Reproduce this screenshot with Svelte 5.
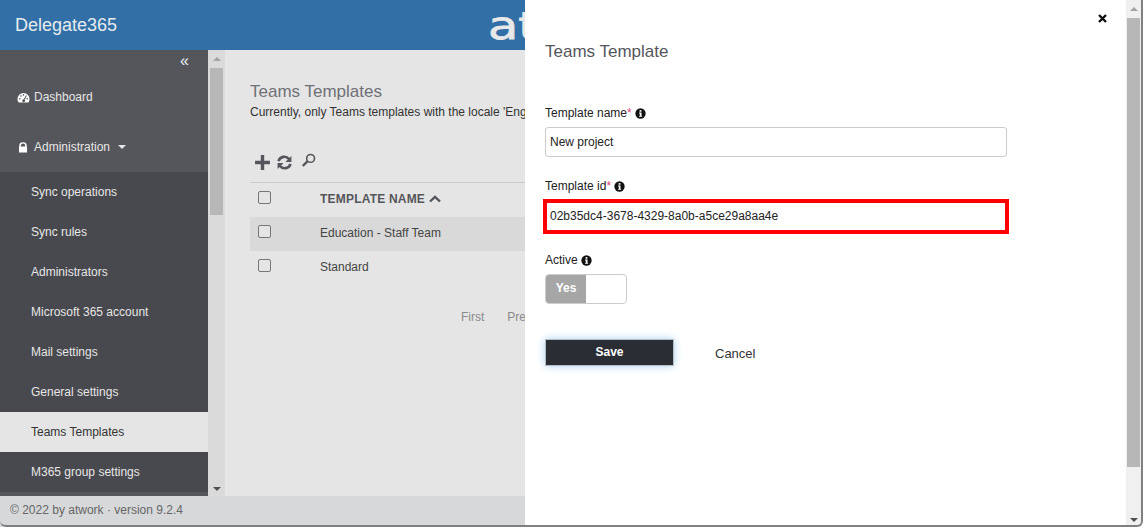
<script lang="ts">
  const subItems = [
    'Sync operations',
    'Sync rules',
    'Administrators',
    'Microsoft 365 account',
    'Mail settings',
    'General settings',
    'Teams Templates',
    'M365 group settings',
  ];
  const rows = ['Education - Staff Team', 'Standard'];
</script>

{#snippet info()}
  <svg class="info" viewBox="0 0 12 12" aria-hidden="true">
    <circle cx="6" cy="6" r="5.6" fill="#111" />
    <rect x="5" y="2.3" width="2" height="1.8" fill="#fff" />
    <path d="M4.4 5h2.7v3.6h.7v1H4.4v-1h.8V6h-.8z" fill="#fff" />
  </svg>
{/snippet}

{#snippet scrollArrows()}
  <span class="arrow arrow--up"></span>
  <span class="thumb"></span>
  <span class="arrow arrow--down"></span>
{/snippet}

<div class="page">
  <header class="topbar">
    <span class="brand">Delegate365</span>
    <span class="logo">atwork</span>
  </header>

  <div class="body">
    <aside class="sidebar">
      <div class="menu">
        <div class="collapse">«</div>
        <a class="item item--first">
          <svg class="ico" viewBox="0 0 14 12" aria-hidden="true">
            <path d="M7 1a6.6 6.6 0 0 0-6.6 6.6c0 1.5.5 2.8 1.3 3.9h10.6a6.5 6.5 0 0 0 1.3-3.9A6.6 6.6 0 0 0 7 1z" fill="#fff" />
            <g fill="#55565b">
              <circle cx="3" cy="7.4" r=".9" /><circle cx="4.2" cy="4.4" r=".9" /><circle cx="7" cy="3.2" r=".9" /><circle cx="11" cy="7.4" r=".9" />
              <path d="M9.8 3.6l.9.5-2.4 4.4a1.5 1.5 0 1 1-1-.5z" />
            </g>
          </svg>
          Dashboard
        </a>
        <a class="item">
          <svg class="ico ico--lock" viewBox="0 0 10 12" aria-hidden="true">
            <path d="M1 5V3.6a4 3.3 0 0 1 8 0V5h.4v6.4H.6V5zm1.7 0h4.6V3.7a2.3 2 0 0 0-4.6 0z" fill="#fff" />
          </svg>
          Administration
          <span class="caret"></span>
        </a>
        <nav class="sub">
          {#each subItems as label}
            <a class="sub__item" class:sub__item--active={label === 'Teams Templates'}>{label}</a>
          {/each}
        </nav>
      </div>
      <div class="scroll scroll--side">{@render scrollArrows()}</div>
    </aside>

    <main class="content">
      <h1 class="title">Teams Templates</h1>
      <p class="lead">Currently, only Teams templates with the locale 'English' are supported.</p>

      <div class="tools">
        <svg class="tool" width="17" height="17" viewBox="0 0 16 16" aria-hidden="true">
          <path d="M6.4 1h3.2v5.4H15v3.2H9.6V15H6.4V9.6H1V6.4h5.4z" fill="#55565b" />
        </svg>
        <svg class="tool" width="15" height="15" viewBox="0 0 15 15" aria-hidden="true">
          <path d="M1.5 6.2A6 6 0 0 1 12 4" fill="none" stroke="#55565b" stroke-width="2.6" />
          <path d="M13.5 8.8A6 6 0 0 1 3 11" fill="none" stroke="#55565b" stroke-width="2.6" />
          <path d="M14.4 1v6h-6zM.6 14V8h6z" fill="#55565b" />
        </svg>
        <svg class="tool tool--search" width="15" height="15" viewBox="0 0 15 15" aria-hidden="true">
          <circle cx="9.6" cy="5.4" r="3.9" fill="none" stroke="#55565b" stroke-width="1.6" />
          <path d="M6.6 8.2L1.8 13" stroke="#55565b" stroke-width="2.4" />
        </svg>
      </div>

      <div class="table">
        <div class="row row--head">
          <span class="check"></span>
          <span class="cell">TEMPLATE NAME</span>
          <svg class="sort" width="12" height="8" viewBox="0 0 12 8" aria-hidden="true">
            <path d="M1 6.5L6 1.8l5 4.7" fill="none" stroke="#55565b" stroke-width="2.4" />
          </svg>
        </div>
        {#each rows as row, i}
          <div class="row" class:row--shade={i === 0}>
            <span class="check"></span>
            <span class="cell cell--body">{row}</span>
          </div>
        {/each}
      </div>

      <div class="pager">
        <span>First</span>
        <span>Previous</span>
      </div>
    </main>
  </div>

  <footer class="footer">© 2022 by atwork · version 9.2.4</footer>

  <section class="panel">
    <div class="panel__main">
      <div class="close-row">
        <svg width="9" height="9" viewBox="0 0 9 9" aria-hidden="true">
          <path d="M1 1l7 7M8 1L1 8" stroke="#111" stroke-width="2.4" />
        </svg>
      </div>
      <h2 class="panel__title">Teams Template</h2>

      <div class="field field--name">
        <label class="label">Template name<em>*</em> {@render info()}</label>
        <div class="input">New project</div>
      </div>

      <div class="field field--id">
        <label class="label">Template id<em>*</em> {@render info()}</label>
        <div class="input input--marked">02b35dc4-3678-4329-8a0b-a5ce29a8aa4e</div>
      </div>

      <div class="field field--active">
        <label class="label">Active {@render info()}</label>
        <div class="toggle"><span class="toggle__on">Yes</span></div>
      </div>

      <div class="actions">
        <button class="save" type="button">Save</button>
        <button class="cancel" type="button">Cancel</button>
      </div>
    </div>
    <div class="scroll scroll--panel">{@render scrollArrows()}</div>
  </section>

  <div class="frame"></div>
</div>

<style>
  :global(body) {
    margin: 0;
    background: #fff;
  }

  .page {
    position: relative;
    display: flex;
    flex-direction: column;
    width: 1143px;
    height: 527px;
    overflow: hidden;
    font-family: 'Liberation Sans', Arial, sans-serif;
    font-size: 12px;
    color: #333;
  }

  .topbar {
    display: flex;
    flex: 0 0 50px;
    align-items: center;
    background: #316fa6;
    color: #e6ebf0;
  }

  .brand {
    margin-left: 15px;
    font-size: 18px;
  }

  .logo {
    margin: 2px 0 0 371px;
    font-family: 'DejaVu Sans', sans-serif;
    font-size: 38px;
    line-height: 48px;
    color: #e8e8e8;
    -webkit-text-stroke: 0.8px #e8e8e8;
    transform: scaleX(1.3);
    transform-origin: left center;
  }

  .body {
    display: flex;
    flex: 1;
    min-height: 0;
  }

  .sidebar {
    display: flex;
    flex: 0 0 225px;
    background: #55565b;
  }

  .menu {
    flex: 0 0 208px;
    overflow: hidden;
  }

  .collapse {
    height: 22px;
    padding-right: 19px;
    text-align: right;
    font-size: 16px;
    line-height: 22px;
    color: #e8eef4;
  }

  .item {
    display: flex;
    align-items: center;
    height: 50px;
    padding-left: 17px;
    color: #e6e6e6;
  }

  .item--first {
    height: 50px;
  }

  .ico {
    width: 13px;
    height: 11px;
    margin-right: 4px;
  }

  .ico--lock {
    width: 10px;
    margin-left: 1px;
    margin-right: 6px;
  }

  .caret {
    margin-left: 8px;
    border-top: 4px solid #e6e6e6;
    border-left: 4px solid transparent;
    border-right: 4px solid transparent;
  }

  .sub {
    background: #48494e;
  }

  .sub__item {
    display: block;
    height: 40px;
    padding-left: 31px;
    line-height: 40px;
    color: #e6e6e6;
  }

  .sub__item--active {
    background: #e5e5e5;
    color: #333;
  }

  .scroll {
    display: flex;
    flex-direction: column;
    align-items: stretch;
  }

  .scroll--side {
    flex: 0 0 17px;
    padding: 0 2px;
    box-sizing: border-box;
    background: #dadada;
  }

  .scroll--panel {
    flex: 0 0 15px;
    padding: 0 1px;
    box-sizing: border-box;
    background: #f0f0f0;
  }

  .thumb {
    background: #b7b7b7;
  }

  .scroll--side .thumb {
    height: 147px;
    margin-bottom: auto;
  }

  .scroll--panel .thumb {
    height: 449px;
    margin-bottom: auto;
  }

  .arrow {
    flex: none;
    align-self: center;
    width: 0;
    height: 0;
    border-left: 4px solid transparent;
    border-right: 4px solid transparent;
  }

  .arrow--up {
    margin: 7px 0 7px;
    border-bottom: 4px solid #a3a3a3;
  }

  .arrow--down {
    margin: 0 0 5px;
    border-top: 4px solid #505050;
  }

  .content {
    flex: 1;
    min-width: 0;
    padding: 32px 0 0 25px;
    background: #e5e5e5;
    white-space: nowrap;
    overflow: hidden;
  }

  .title {
    margin: 0;
    font-size: 17px;
    font-weight: 400;
    line-height: 20px;
    color: #6f7076;
  }

  .lead {
    margin: 3px 0 0;
    line-height: 14px;
    color: #333;
  }

  .tools {
    display: flex;
    align-items: center;
    height: 22px;
    margin-top: 32px;
    padding-left: 4px;
  }

  .tool {
    margin-right: 6px;
  }

  .tool--search {
    margin-left: 3px;
    margin-bottom: 3px;
  }

  .table {
    margin-top: 9px;
    border-top: 1px solid #c9c9c9;
  }

  .row {
    display: flex;
    align-items: center;
    box-sizing: border-box;
    height: 34px;
    padding: 0 0 2px 8px;
  }

  .row--shade {
    background: #d9d9d9;
  }

  .check {
    flex: none;
    box-sizing: border-box;
    width: 13px;
    height: 13px;
    margin-top: -3px;
    border: 1px solid #767676;
    border-radius: 2px;
    background: #e5e5e5;
  }

  .cell {
    margin-left: 49px;
    font-weight: 700;
    letter-spacing: 0.2px;
    color: #55565b;
  }

  .cell--body {
    font-weight: 400;
    letter-spacing: 0;
    color: #444;
  }

  .sort {
    margin-left: 4px;
  }

  .pager {
    display: flex;
    gap: 23px;
    margin-top: 25px;
    padding-left: 211px;
    color: #8a8a8a;
  }

  .footer {
    flex: 0 0 31px;
    padding-left: 10px;
    line-height: 29px;
    background: #d7d8da;
    color: #666;
  }

  .panel {
    position: absolute;
    top: 0;
    right: 0;
    bottom: 0;
    display: flex;
    width: 618px;
    padding-right: 2px;
    box-sizing: border-box;
    background: #fff;
  }

  .panel__main {
    flex: 1;
    padding-left: 20px;
  }

  .close-row {
    display: flex;
    justify-content: flex-end;
    height: 14px;
    padding: 14px 19px 0 0;
    line-height: 0;
  }

  .panel__title {
    margin: 14px 0 0;
    font-size: 17px;
    font-weight: 400;
    line-height: 20px;
    color: #55565b;
  }

  .field {
    width: 462px;
  }

  .field--name {
    margin-top: 44px;
  }

  .field--id {
    margin-top: 22px;
  }

  .field--active {
    margin-top: 19px;
  }

  .label {
    display: flex;
    align-items: center;
    height: 14px;
    color: #222;
  }

  .label em {
    font-style: normal;
    color: #e0457b;
  }

  .info {
    width: 11px;
    height: 11px;
    margin-left: 3px;
  }

  .input {
    box-sizing: border-box;
    height: 30px;
    margin-top: 7px;
    padding-left: 4px;
    border: 1px solid #ccc;
    border-radius: 3px;
    line-height: 28px;
    color: #222;
  }

  .input--marked {
    height: 35px;
    margin-top: 6px;
    margin-left: -2px;
    width: 466px;
    padding-left: 3px;
    border: 4px solid #f00;
    border-radius: 0;
    line-height: 27px;
  }

  .toggle {
    box-sizing: border-box;
    width: 82px;
    height: 30px;
    margin-top: 7px;
    border: 1px solid #ccc;
    border-radius: 4px;
    overflow: hidden;
  }

  .toggle__on {
    display: block;
    width: 40px;
    height: 100%;
    background: #a6a6a6;
    color: #fff;
    font-weight: 700;
    line-height: 27px;
    text-align: center;
  }

  .actions {
    display: flex;
    align-items: center;
    margin-top: 35px;
  }

  .save {
    width: 129px;
    height: 27px;
    padding: 0 0 2px;
    border: 1px solid #b5bcc4;
    background: #2a2d34;
    box-shadow: 0 0 8px #a9d2f5;
    color: #fff;
    font: 700 12px 'Liberation Sans', Arial, sans-serif;
  }

  .cancel {
    margin-left: 41px;
    padding: 2px 0 0;
    border: 0;
    background: none;
    color: #333;
    font: 13px 'Liberation Sans', Arial, sans-serif;
  }

  .frame {
    position: absolute;
    inset: 0;
    border-right: 2px solid #808080;
    border-bottom: 2px solid #808080;
    border-radius: 0 0 6px 6px;
    pointer-events: none;
  }
</style>
